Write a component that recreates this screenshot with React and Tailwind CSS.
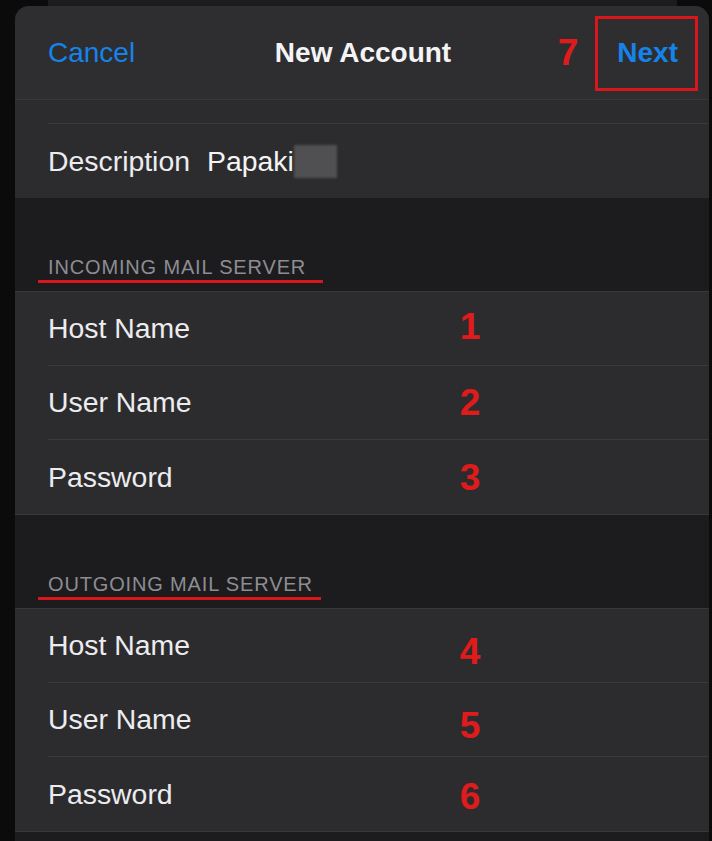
const font = { fontFamily: '"Liberation Sans", Arial, sans-serif' };

const incoming = [
  { label: "Host Name", mark: "1", shift: "-translate-y-[2px]" },
  { label: "User Name", mark: "2", shift: "translate-y-0" },
  { label: "Password", mark: "3", shift: "translate-y-0" },
];

const outgoing = [
  { label: "Host Name", mark: "4", shift: "translate-y-[6px]" },
  { label: "User Name", mark: "5", shift: "translate-y-[6px]" },
  { label: "Password", mark: "6", shift: "translate-y-[2px]" },
];

function Mark({ children, className = "" }) {
  return (
    <span className={`text-[37px] font-bold leading-none text-[#e01b1b] ${className}`}>{children}</span>
  );
}

function SectionHeader({ title, lineWidth }) {
  return (
    <div className="h-[93px] pl-[33px] pt-[57px]">
      <p className="text-[20px] leading-[24px] tracking-[0.85px] text-[#8d8d92]">{title}</p>
      <div className={`-ml-[10px] mt-[1px] h-[3px] bg-[#d8161b] ${lineWidth}`} />
    </div>
  );
}

function FieldGroup({ rows }) {
  return (
    <div className="border-y border-[#38383a] bg-[#2c2c2e]">
      {rows.map((row, i) => (
        <div key={row.mark} className="pl-[33px]">
          <div
            className={`flex h-[74px] items-center ${i < rows.length - 1 ? "border-b border-[#3a3a3c]" : ""}`}
          >
            <span className="w-[410px] flex-none text-[28.4px] text-[#ececf0]">{row.label}</span>
            <span className="flex w-[24px] justify-center">
              <Mark className={`inline-block ${row.shift}`}>{row.mark}</Mark>
            </span>
          </div>
        </div>
      ))}
    </div>
  );
}

export default function App() {
  return (
    <div className="h-[841px] w-[712px] overflow-hidden bg-[#0b0b0b]" style={font}>
      {/* sheet peeking from behind */}
      <div className="ml-[48px] h-[6px] w-[629px] bg-[#1c1c1e]" />

      <div className="ml-[15px] h-[835px] w-[694px] overflow-hidden rounded-t-[14px] bg-[#1c1c1e]">
        {/* navigation bar */}
        <div className="grid h-[94px] grid-cols-[1fr_auto_1fr] items-center border-b border-[#38383a] bg-[#2e2e30] pl-[33px] pr-[31px]">
          <span className="text-[28px] text-[#1683ea]">Cancel</span>
          <span className="text-[28px] font-bold text-[#f4f4f6]">New Account</span>
          <div className="flex items-center justify-end">
            <Mark>7</Mark>
            <span className="relative ml-[39px] text-[28px] font-bold text-[#1683ea]">
              Next
              <span className="absolute -bottom-[17px] -left-[22px] -right-[20px] -top-[16px] border-[3px] border-[#d8161b]" />
            </span>
          </div>
        </div>

        {/* account fields, the email row scrolled mostly under the bar */}
        <div className="bg-[#2c2c2e]">
          <div className="pl-[33px]">
            <div className="h-[24px] overflow-hidden border-b border-[#3a3a3c]">
              <p className="-mt-[29px] pl-[162px] text-[28px] leading-[28px] text-[#f2f2f2]">info@papaki.gr</p>
            </div>
            <div className="flex h-[74px] items-center text-[28.4px] text-[#ececf0]">
              <span>Description</span>
              <span className="ml-[17px] text-[#f4f4f4]">Papaki</span>
              <span className="h-[33px] w-[43px] bg-[#505052] blur-[1px]" />
            </div>
          </div>
        </div>

        <SectionHeader title="INCOMING MAIL SERVER" lineWidth="w-[285px]" />
        <FieldGroup rows={incoming} />

        <SectionHeader title="OUTGOING MAIL SERVER" lineWidth="w-[283px]" />
        <FieldGroup rows={outgoing} />
      </div>
    </div>
  );
}
